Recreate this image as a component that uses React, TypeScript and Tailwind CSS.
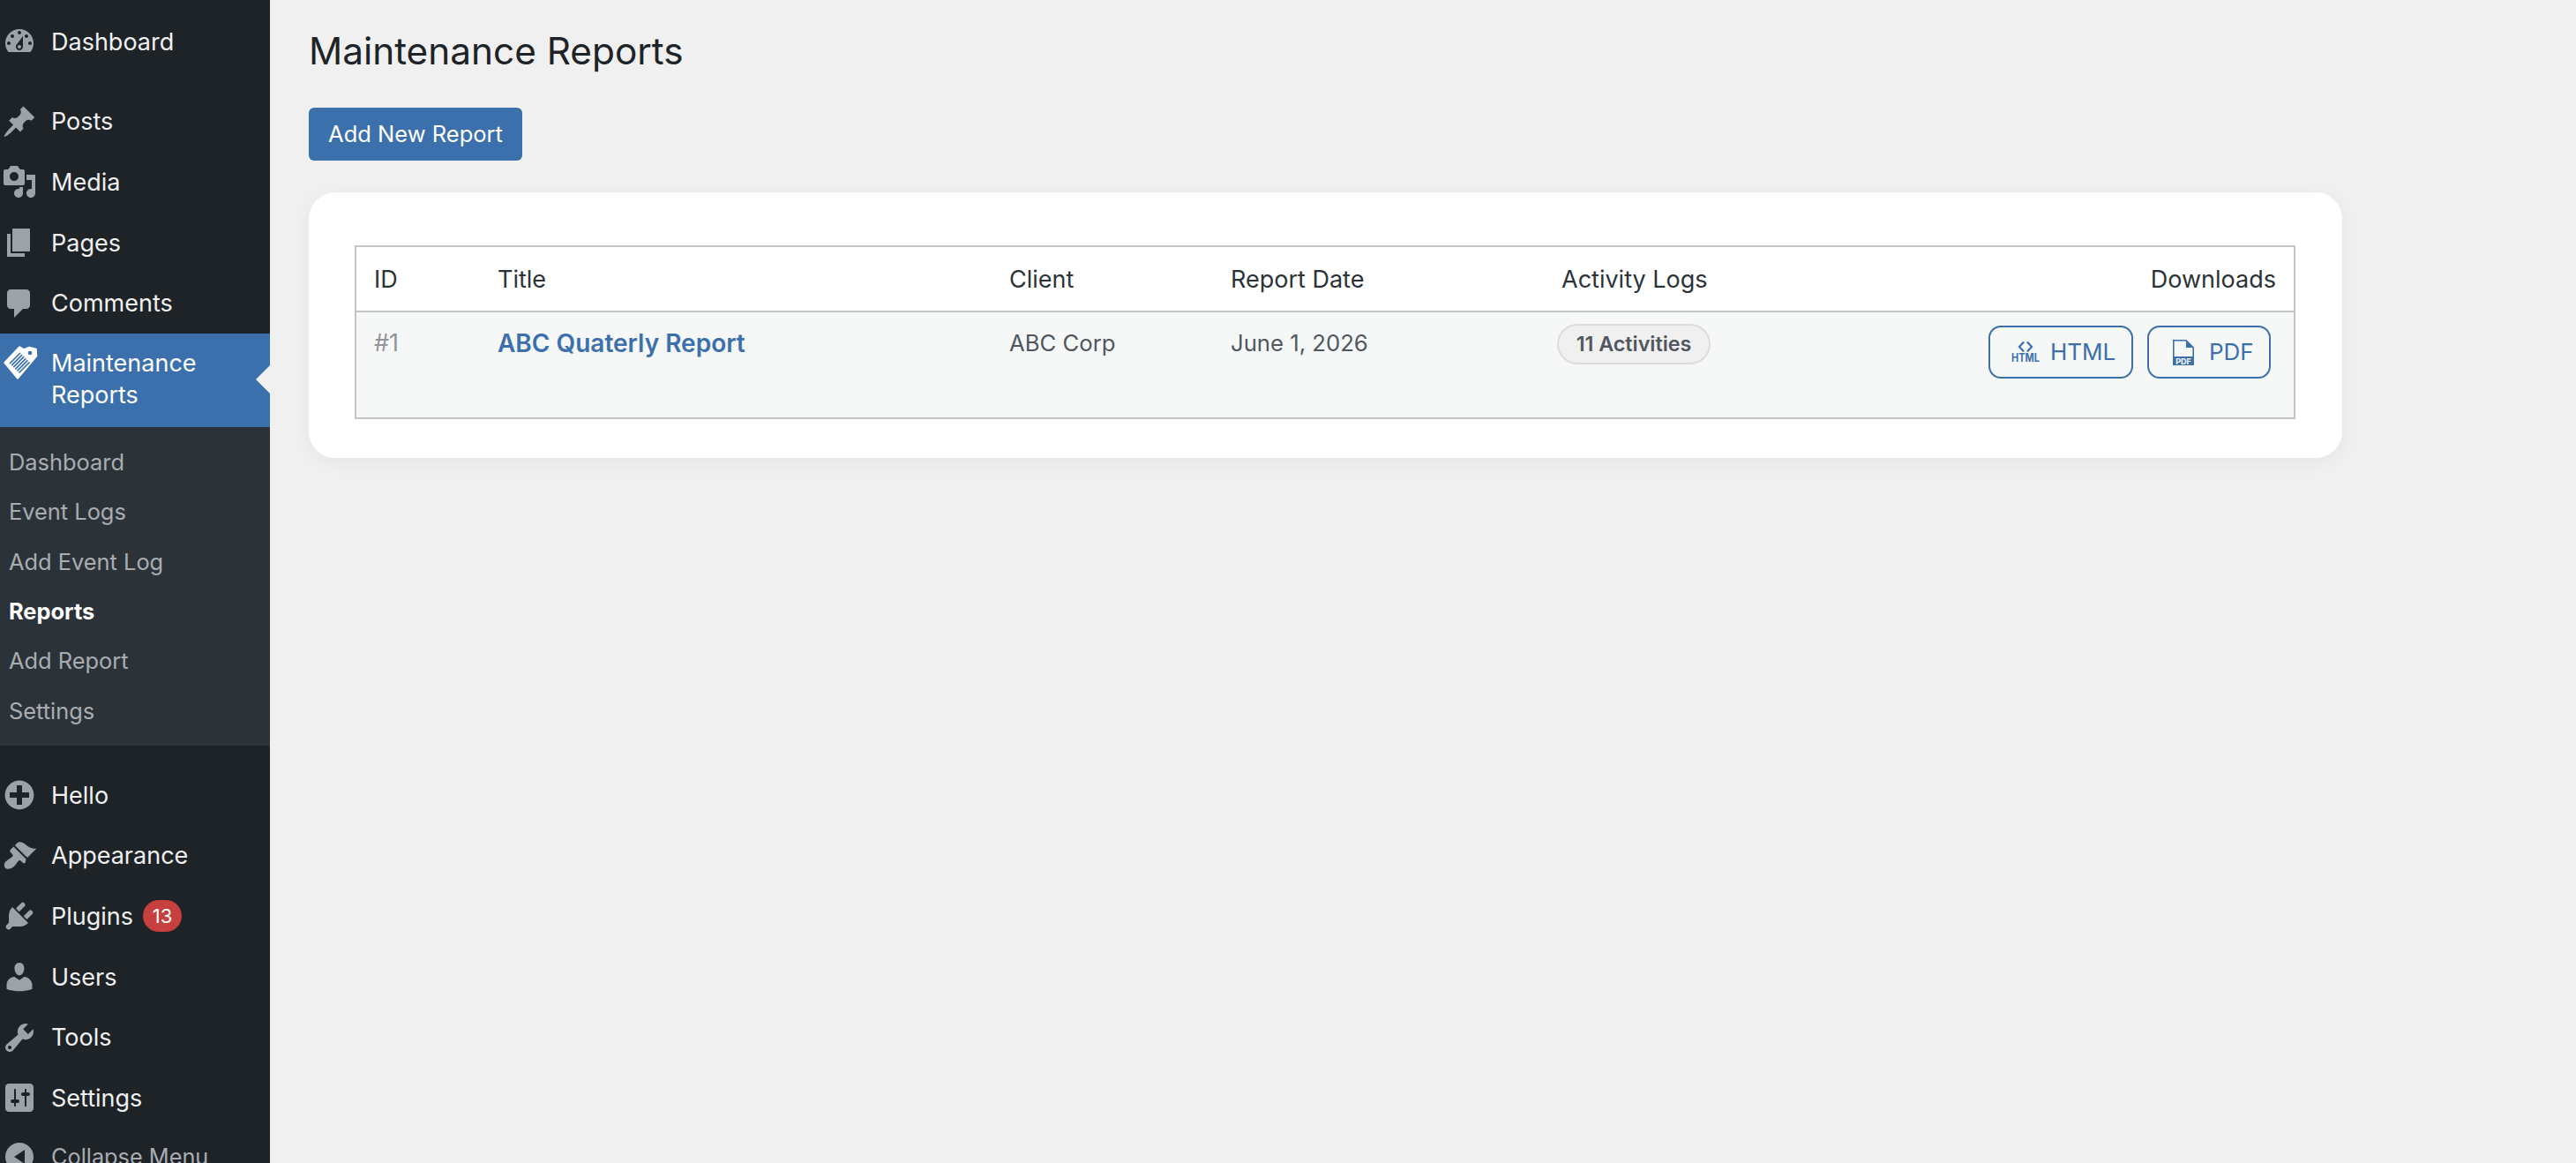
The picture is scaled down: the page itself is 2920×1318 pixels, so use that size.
import React from "react";

const icons: Record<string, string> = {
  dashboard:
    "M3.76 16h12.48c1.1-1.37 1.76-3.11 1.76-5 0-4.42-3.58-8-8-8s-8 3.58-8 8c0 1.89.66 3.63 1.76 5zM10 4c.55 0 1 .45 1 1s-.45 1-1 1-1-.45-1-1 .45-1 1-1zM6 6c.55 0 1 .45 1 1s-.45 1-1 1-1-.45-1-1 .45-1 1-1zm8 0c.55 0 1 .45 1 1s-.45 1-1 1-1-.45-1-1 .45-1 1-1zm-5.37 5.55L12 7v6c0 1.1-.9 2-2 2s-2-.9-2-2c0-.57.24-1.08.63-1.45zM4 10c.55 0 1 .45 1 1s-.45 1-1 1-1-.45-1-1 .45-1 1-1zm12 0c.55 0 1 .45 1 1s-.45 1-1 1-1-.45-1-1 .45-1 1-1zm-5 3c0-.55-.45-1-1-1s-1 .45-1 1 .45 1 1 1 1-.45 1-1z",
  posts:
    "M10.44 3.02l1.82-1.82 6.36 6.35-1.83 1.82c-1.05-.68-2.48-.57-3.41.36l-.75.75c-.92.93-1.04 2.35-.35 3.41l-1.83 1.82-2.41-2.41-2.8 2.79c-.42.42-3.38 2.71-3.8 2.29s1.86-3.39 2.28-3.81l2.79-2.79L4.1 9.36l1.83-1.82c1.05.69 2.48.57 3.4-.36l.75-.75c.93-.92 1.05-2.35.36-3.41z",
  media:
    "M13 11V4c0-.55-.45-1-1-1h-1.67L9 1H5L3.67 3H2c-.55 0-1 .45-1 1v7c0 .55.45 1 1 1h10c.55 0 1-.45 1-1zM7 4.5c1.38 0 2.5 1.12 2.5 2.5S8.38 9.5 7 9.5 4.5 8.38 4.5 7 5.62 4.5 7 4.5zM14 6h5v10.5c0 1.38-1.12 2.5-2.5 2.5S14 17.88 14 16.5s1.12-2.5 2.5-2.5c.17 0 .34.02.5.05V9h-3V6zm-4 8.05V13h2v3.5c0 1.38-1.12 2.5-2.5 2.5S7 17.88 7 16.5 8.12 14 9.5 14c.17 0 .34.02.5.05z",
  pages: "M6 15V2h10v13H6zm-1 1h8v2H3V5h2v11z",
  comments:
    "M5 2h9c1.1 0 2 .9 2 2v7c0 1.1-.9 2-2 2h-2l-5 5v-5H5c-1.1 0-2-.9-2-2V4c0-1.1.9-2 2-2z",
  hello:
    "M15.8 4.2c3.2 3.21 3.2 8.39 0 11.6-3.21 3.2-8.39 3.2-11.6 0C1 12.59 1 7.41 4.2 4.2 7.41 1 12.59 1 15.8 4.2zm-4.3 11.3v-4h4v-3h-4v-4h-3v4h-4v3h4v4h3z",
  appearance:
    "M14.48 11.06L7.41 3.99l1.5-1.5c.5-.56 2.3-.47 3.51.32 1.21.8 1.43 1.28 2.91 2.1 1.18.64 2.45 1.26 4.45.85zm-.71.71L6.7 4.7 4.93 6.47c-.39.39-.39 1.02 0 1.41l1.06 1.06c.39.39.39 1.03 0 1.42-.6.6-1.43 1.11-2.21 1.69-.35.26-.7.53-1.01.84C1.43 13.23 1 15.82 2 16.82c.99.99 3.59.56 4.93-.78.3-.31.57-.66.84-1.01.57-.77 1.08-1.61 1.69-2.21.39-.39 1.02-.39 1.41 0l1.06 1.06c.39.39 1.02.39 1.41 0z",
  plugins:
    "M13.11 4.36L9.87 7.6 8 5.73l3.24-3.24c.35-.34 1.05-.2 1.56.32.52.51.66 1.21.31 1.55zm-8 1.77l.91-1.12 9.01 9.01-1.19.84c-.71.71-2.63 1.16-3.82 1.16H6.14L4.9 17.26c-.59.59-1.54.59-2.12 0-.59-.58-.59-1.53 0-2.12l1.24-1.24v-3.88c0-1.13.4-3.19 1.09-3.89zm7.26 3.97l3.24-3.24c.34-.35 1.04-.21 1.55.31.52.51.66 1.21.31 1.55l-3.24 3.25z",
  users:
    "M10 9.25c-2.27 0-2.73-3.44-2.73-3.44C7 4.02 7.82 2 9.97 2c2.16 0 2.98 2.02 2.71 3.81 0 0-.41 3.44-2.68 3.44zm0 2.57L12.72 10c2.39 0 4.52 2.33 4.52 4.53v2.49s-3.65 1.13-7.24 1.13c-3.65 0-7.24-1.13-7.24-1.13v-2.49c0-2.25 1.94-4.48 4.47-4.48z",
  tools:
    "M16.68 9.77c-1.34 1.34-3.3 1.67-4.95.99l-5.41 6.52c-.99.99-2.59.99-3.58 0s-.99-2.59 0-3.57l6.52-5.42c-.68-1.65-.35-3.61.99-4.95 1.28-1.28 3.12-1.62 4.72-1.06l-2.89 2.89 2.82 2.82 2.86-2.87c.53 1.58.18 3.39-1.08 4.65zM3.81 16.21c.4.39 1.04.39 1.43 0 .4-.4.4-1.04 0-1.43-.39-.4-1.03-.4-1.43 0-.39.39-.39 1.03 0 1.43z",
  settings:
    "M18 16V4c0-1.1-.9-2-2-2H4c-1.1 0-2 .9-2 2v12c0 1.1.9 2 2 2h12c1.1 0 2-.9 2-2zM8 11h1c.55 0 1 .45 1 1s-.45 1-1 1H8v1.5c0 .28-.22.5-.5.5s-.5-.22-.5-.5V13H6c-.55 0-1-.45-1-1s.45-1 1-1h1V5.5c0-.28.22-.5.5-.5s.5.22.5.5V11zm5-2h-1c-.55 0-1-.45-1-1s.45-1 1-1h1V5.5c0-.28.22-.5.5-.5s.5.22.5.5V7h1c.55 0 1 .45 1 1s-.45 1-1 1h-1v5.5c0 .28-.22.5-.5.5s-.5-.22-.5-.5V9z",
  collapse:
    "M18 10c0-4.42-3.58-8-8-8s-8 3.58-8 8 3.58 8 8 8 8-3.58 8-8zm-5 4l-6-4 6-4v8z",
};

const Icon = ({ name }: { name: string }) => (
  <svg
    viewBox="0 0 20 20"
    className="w-10 h-10 ml-[2px] shrink-0 fill-[#9ca2a7]"
  >
    <path fillRule="evenodd" d={icons[name]} />
  </svg>
);

const MenuItem = ({
  name,
  label,
  badge,
}: {
  name: string;
  label: string;
  badge?: string;
}) => (
  <div className="flex items-center h-[68.6px] gap-4 text-[#f0f0f1]">
    <Icon name={name} />
    <span className="mt-[1px]">{label}</span>
    {badge && (
      <span className="flex items-center justify-center -ml-[5px] w-[44px] h-[36px] rounded-full bg-[#c5403e] text-white text-[22px]">
        {badge}
      </span>
    )}
  </div>
);

const stripes = [0, 1, 2, 3, 4, 5];

const TagIcon = () => (
  <svg viewBox="0 0 50 50" className="w-[50px] h-[50px] -mt-[9px] shrink-0">
    <path
      fill="#fff"
      strokeLinejoin="round"
      stroke="#fff"
      strokeWidth="1.500"
      d="M5 26 22 8l5 3 6-2.500 8 2 .5 8-4.500 5.500L20 44z"
    />
    <circle cx="34" cy="15" r="2.300" fill="#3b70ad" />
    <g stroke="#3b70ad" strokeWidth="1.700">
      {stripes.map((i) => (
        <line
          key={i}
          x1={11 + i * 2.1}
          y1={27 + i * 2.1}
          x2={23 + i * 2.1}
          y2={15 + i * 2.1}
        />
      ))}
    </g>
  </svg>
);

const SubItem = ({ label, current }: { label: string; current?: boolean }) => (
  <div
    className={
      current
        ? "flex items-center h-[56.3px] pl-[10px] text-white font-bold"
        : "flex items-center h-[56.3px] pl-[10px] text-[#a9adb2]"
    }
  >
    {label}
  </div>
);

const HtmlIcon = () => (
  <svg viewBox="0 0 32 27" className="w-8 h-[27px] mt-[3px] shrink-0 fill-none">
    <path
      d="M14 .5 9 6l5 5.500M18 .5 23 6l-5 5.500"
      stroke="#3b70ad"
      strokeWidth="2.200"
    />
    <text
      x="0"
      y="23"
      textLength="32"
      lengthAdjust="spacingAndGlyphs"
      fontSize="12.500"
      fontWeight="700"
      fill="#3b70ad"
      fontFamily="Inter, sans-serif"
    >
      HTML
    </text>
  </svg>
);

const PdfIcon = () => (
  <svg viewBox="0 0 24 29" className="w-6 h-[29px] shrink-0 fill-none">
    <path d="M.8.8h14l8.400 8.400v19H.8z" stroke="#3b70ad" strokeWidth="1.600" />
    <path d="M15 0l9 9h-9z" fill="#3b70ad" />
    <rect x="0" y="19" width="24" height="10" fill="#3b70ad" />
    <text
      x="12"
      y="27.500"
      textAnchor="middle"
      fontSize="9"
      fontWeight="700"
      fill="#fff"
      fontFamily="Inter, sans-serif"
    >
      PDF
    </text>
  </svg>
);

const Sidebar = () => (
  <aside className="w-[306px] h-[1318px] shrink-0 overflow-hidden bg-[#1d2327] text-[27px] leading-[36px]">
    <div className="pt-[13px]">
      <MenuItem name="dashboard" label="Dashboard" />
    </div>
    <div className="mt-[22px]">
      <MenuItem name="posts" label="Posts" />
      <MenuItem name="media" label="Media" />
      <MenuItem name="pages" label="Pages" />
      <MenuItem name="comments" label="Comments" />
    </div>
    <div className="relative flex items-start gap-2 h-[106px] pt-[16px] bg-[#3b70ad] text-white">
      <TagIcon />
      <span>
        Maintenance
        <br />
        Reports
      </span>
      <div className="absolute right-0 top-[36px] w-0 h-0 border-y-[16px] border-y-transparent border-r-[16px] border-r-[#f0f0f1]" />
    </div>
    <div className="h-[361px] pt-[12px] bg-[#2c3338] text-[25.400px]">
      <SubItem label="Dashboard" />
      <SubItem label="Event Logs" />
      <SubItem label="Add Event Log" />
      <SubItem label="Reports" current />
      <SubItem label="Add Report" />
      <SubItem label="Settings" />
    </div>
    <div className="mt-[22px]">
      <MenuItem name="hello" label="Hello" />
      <MenuItem name="appearance" label="Appearance" />
      <MenuItem name="plugins" label="Plugins" badge="13" />
      <MenuItem name="users" label="Users" />
      <MenuItem name="tools" label="Tools" />
      <MenuItem name="settings" label="Settings" />
      <div className="flex items-center h-[68.6px] -mt-[2px] gap-4 text-[25.300px] text-[#a9adb2]">
        <Icon name="collapse" />
        <span>Collapse Menu</span>
      </div>
    </div>
  </aside>
);

const App = () => {
  return (
    <div className="flex h-[1318px] overflow-hidden bg-[#f0f0f1] font-[Inter,sans-serif]">
      <Sidebar />
      <main className="flex-1 pl-[44px] pt-[29px]">
        <h1 className="text-[42.300px] leading-[58px] text-[#1d2327]">
          Maintenance Reports
        </h1>
        <button className="block mt-[35px] w-[242px] h-[60px] pt-[1px] rounded-[6px] bg-[#3b70ad] text-white text-[25.500px]">
          Add New Report
        </button>
        <div className="mt-[36px] w-[2305px] h-[301px] pt-[60px] px-[52px] rounded-[30px] bg-white shadow-[0_4px_24px_rgba(0,0,0,0.05)]">
          <table className="w-[2200px] h-[197px] border-collapse border-2 border-[#c3c4c7] text-[25.700px] leading-[36px] text-[#50575e]">
            <thead>
              <tr className="h-[74px] border-b-2 border-[#c3c4c7] text-left text-[27px] text-[#2c3338]">
                <th className="w-[161px] pl-[20px] pt-[1px] font-normal">ID</th>
                <th className="w-[580px] pt-[1px] font-normal">Title</th>
                <th className="w-[251px] pt-[1px] font-normal">Client</th>
                <th className="w-[375px] pt-[1px] font-normal">Report Date</th>
                <th className="w-[400px] pt-[1px] font-normal">Activity Logs</th>
                <th className="pr-[20px] pt-[1px] font-normal text-right">Downloads</th>
              </tr>
            </thead>
            <tbody>
              <tr className="align-top bg-[#f6f7f7]">
                <td className="pl-[20px] pt-[17px] text-[27px] text-[#949494]">#1</td>
                <td className="pt-[17px] text-[28px] font-semibold text-[#3b70ad]">
                  ABC Quaterly Report
                </td>
                <td className="pt-[17px]">ABC Corp</td>
                <td className="pt-[17px]">June 1, 2026</td>
                <td className="pt-[13px]">
                  <span className="flex items-center justify-center -ml-[5px] w-[174px] h-[46px] rounded-full border-2 border-[#dcdcde] bg-[#f0f0f1] text-[23.300px] font-semibold text-[#50575e]">
                    11 Activities
                  </span>
                </td>
                <td className="pt-[15px] pr-[26px]">
                  <div className="flex justify-end gap-[16px] text-[26px]">
                    <a className="flex items-center gap-[12px] w-[164px] h-[60px] pl-[24px] rounded-[14px] border-2 border-[#3b70ad] text-[#3b70ad]">
                      <HtmlIcon />
                      HTML
                    </a>
                    <a className="flex items-center gap-[17px] w-[140px] h-[60px] pl-[27px] rounded-[14px] border-2 border-[#3b70ad] text-[#3b70ad]">
                      <PdfIcon />
                      PDF
                    </a>
                  </div>
                </td>
              </tr>
            </tbody>
          </table>
        </div>
      </main>
    </div>
  );
};

export default App;
